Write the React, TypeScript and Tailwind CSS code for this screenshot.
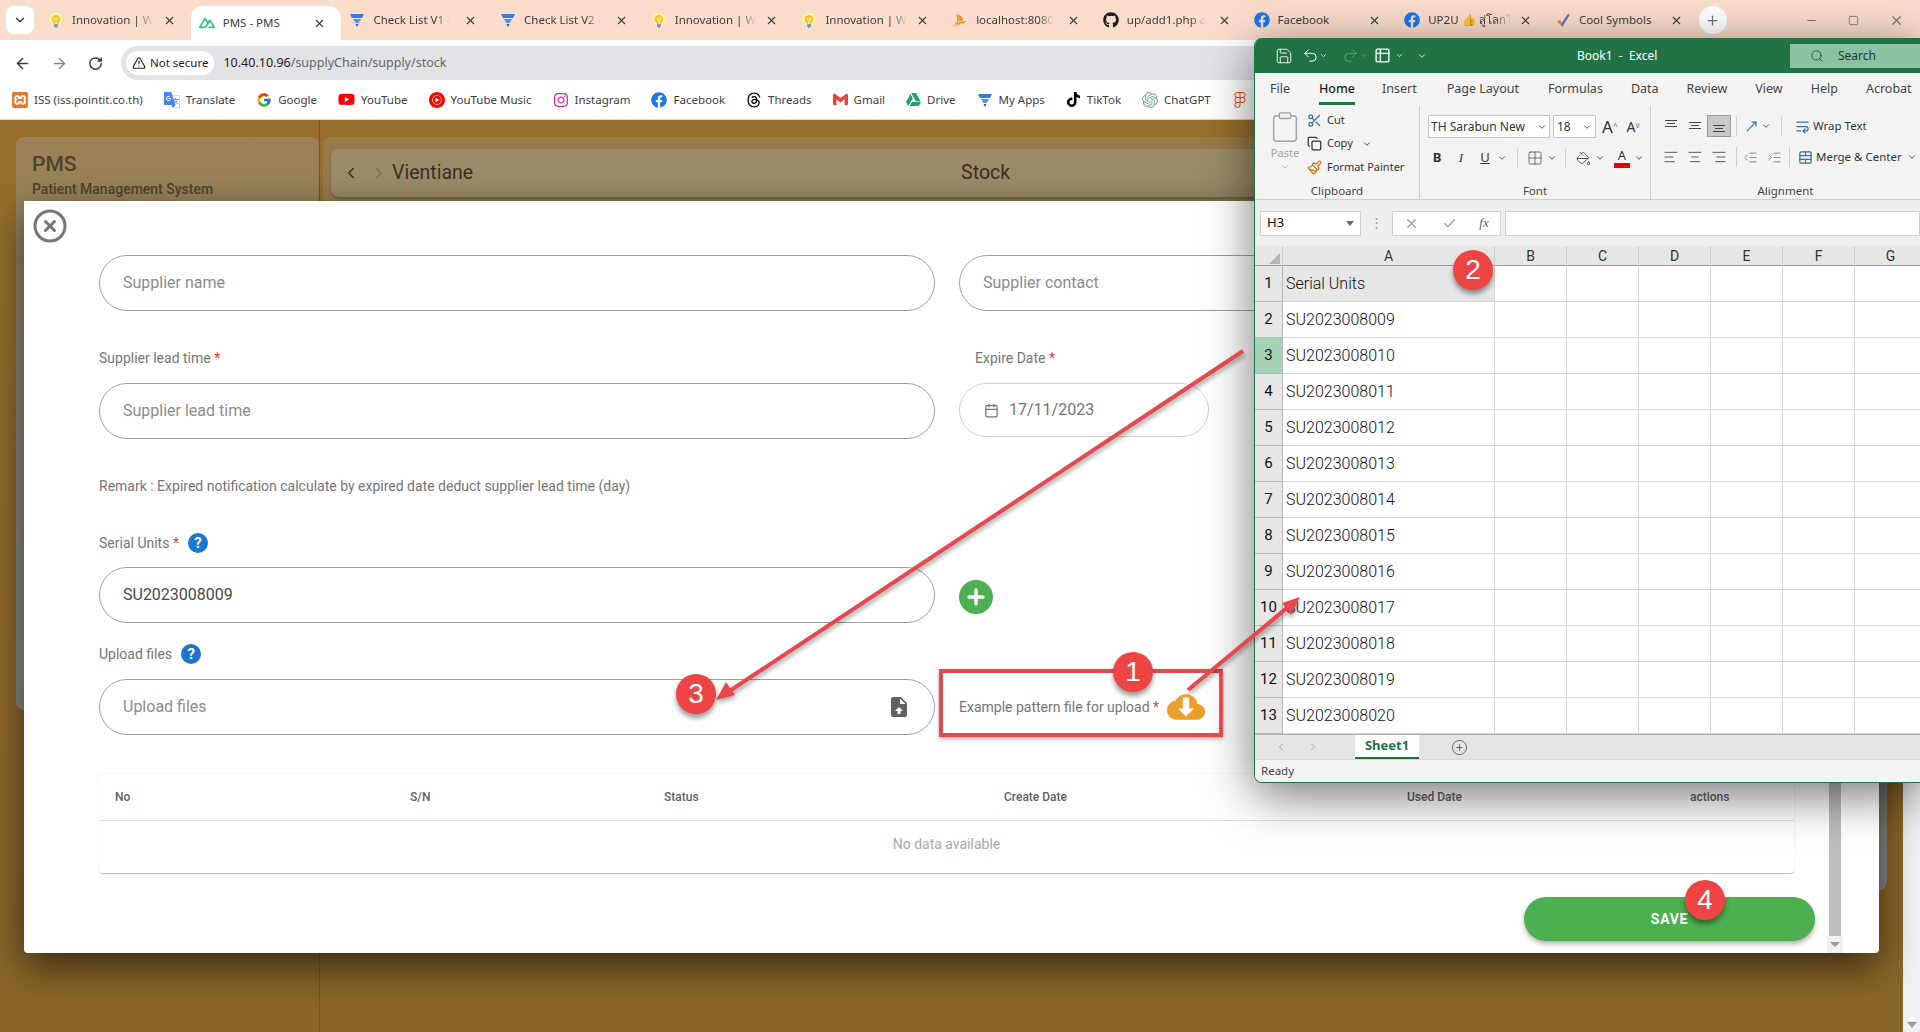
import { ChevronDown, X, Plus, Minus, Square, ArrowLeft, ArrowRight, RotateCw, TriangleAlert, Calendar, CircleX, Save, Undo2, Redo2, Search, Scissors, Copy, Clipboard, Paintbrush, AlignLeft, AlignCenter, AlignRight, IndentDecrease, IndentIncrease, WrapText, TableCellsMerge, PaintBucket, Grid2x2, Check, ChevronLeft, ChevronRight, CirclePlus, Table2, MoveUpRight } from 'lucide-react'
import { FcIdea, FcGoogle } from 'react-icons/fc'
import { FaFacebook, FaGithub, FaYoutube, FaInstagram, FaFigma, FaTiktok } from 'react-icons/fa'
import { FaThreads } from 'react-icons/fa6'
import { SiNuxtdotjs, SiPhpmyadmin, SiXampp, SiGoogletranslate, SiYoutubemusic, SiGmail, SiGoogledrive, SiOpenai } from 'react-icons/si'
import type { ReactNode } from 'react'

function Funnel() {
  return (
    <svg viewBox="0 0 16 16" className="w-4 h-4">
      <path d="M1 2h14l-2 4H3z" fill="#2f7de1" />
      <path d="M4 7h8l-2.5 4h-3z" fill="#4c93ee" />
      <path d="M6.5 12h3L8 15z" fill="#1a5fc0" />
    </svg>
  )
}

function CheckMark() {
  return (
    <svg viewBox="0 0 16 16" className="w-4 h-4">
      <path d="M2 9l3-1 2 3 6-9 1.5 1L7 15z" fill="#e98b3a" />
      <path d="M7 11l6-9 1.5 1L7 15z" fill="#3b76d6" />
    </svg>
  )
}

const tabs: { icon: ReactNode; title: string; active?: boolean; fade?: boolean }[] = [
  { icon: <FcIdea size={18} />, title: 'Innovation | W', fade: true },
  { icon: <SiNuxtdotjs size={16} className="text-[#21c58b]" />, title: 'PMS - PMS', active: true },
  { icon: <Funnel />, title: 'Check List V1 -', fade: true },
  { icon: <Funnel />, title: 'Check List V2 -', fade: true },
  { icon: <FcIdea size={18} />, title: 'Innovation | W', fade: true },
  { icon: <FcIdea size={18} />, title: 'Innovation | W', fade: true },
  { icon: <SiPhpmyadmin size={16} className="text-[#e8912d]" />, title: 'localhost:8080', fade: true },
  { icon: <FaGithub size={16} className="text-[#1b1f23]" />, title: 'up/add1.php a', fade: true },
  { icon: <FaFacebook size={16} className="text-[#1877f2]" />, title: 'Facebook' },
  { icon: <FaFacebook size={16} className="text-[#1877f2]" />, title: 'UP2U 👍 สู่โลกใ', fade: true },
  { icon: <CheckMark />, title: 'Cool Symbols' },
]

const bookmarks: { icon: ReactNode; label: string }[] = [
  { icon: <SiXampp size={16} className="text-[#e8762d]" />, label: 'ISS (iss.pointit.co.th)' },
  { icon: <SiGoogletranslate size={16} className="text-[#4285f4]" />, label: 'Translate' },
  { icon: <FcGoogle size={16} />, label: 'Google' },
  { icon: <FaYoutube size={17} className="text-[#ff0000]" />, label: 'YouTube' },
  { icon: <SiYoutubemusic size={16} className="text-[#ff0000]" />, label: 'YouTube Music' },
  { icon: <FaInstagram size={16} className="text-[#d6249f]" />, label: 'Instagram' },
  { icon: <FaFacebook size={16} className="text-[#1877f2]" />, label: 'Facebook' },
  { icon: <FaThreads size={16} className="text-black" />, label: 'Threads' },
  { icon: <SiGmail size={15} className="text-[#ea4335]" />, label: 'Gmail' },
  { icon: <SiGoogledrive size={15} className="text-[#1fa463]" />, label: 'Drive' },
  { icon: <Funnel />, label: 'My Apps' },
  { icon: <FaTiktok size={15} className="text-black" />, label: 'TikTok' },
  { icon: <SiOpenai size={16} className="text-[#74aa9c]" />, label: 'ChatGPT' },
]

function BrowserChrome() {
  return (
    <div className="shrink-0 font-['Noto_Sans',sans-serif] text-[#3c3c3c]">
      <div className="h-10 bg-[#fadccb] flex items-center relative">
        <div className="w-7 h-7 ml-[6px] mr-[6px] rounded-lg bg-white flex items-center justify-center">
          <ChevronDown size={14} strokeWidth={2.5} />
        </div>
        {tabs.map((t, i) => (
          <div
            key={i}
            className={`w-[150.7px] shrink-0 flex items-center pl-2 pr-[15px] ${
              t.active ? 'h-[34px] self-end bg-white rounded-t-xl' : 'h-7'
            }`}
          >
            <span className="w-4 flex justify-center shrink-0">{t.icon}</span>
            <span
              className={`ml-2 whitespace-nowrap text-[11.5px] ${
                t.fade ? '[mask-image:linear-gradient(to_right,black_80%,transparent)]' : ''
              }`}
            >
              {t.title}
            </span>
            <X size={13} strokeWidth={2} className="ml-auto shrink-0" />
          </div>
        ))}
        <div className="w-7 h-7 ml-[1px] rounded-full bg-white flex items-center justify-center">
          <Plus size={15} className="text-[#777]" />
        </div>
        <div className="ml-auto flex items-center gap-[30px] pr-4 text-[#777]">
          <Minus size={13} />
          <Square size={11} />
          <X size={15} />
        </div>
      </div>
      <div className="h-10 bg-white flex items-center pt-[6px]">
        <div className="w-[121px] flex items-center shrink-0 pl-[14px] gap-5">
          <ArrowLeft size={17} strokeWidth={2.2} />
          <ArrowRight size={17} strokeWidth={2.2} className="text-[#888]" />
          <RotateCw size={15} strokeWidth={2.4} />
        </div>
        <div className="flex-1 h-[34px] bg-[#e2e3e6] rounded-l-full flex items-center pl-[5px]">
          <div className="h-6 px-[6px] bg-white rounded-full flex items-center gap-[4px] text-[11.5px] text-[#222]">
            <TriangleAlert size={14} />
            Not secure
          </div>
          <span className="ml-[9px] text-[12.5px] text-[#666]">
            <span className="text-[#222]">10.40.10.96</span>/supplyChain/supply/stock
          </span>
        </div>
      </div>
      <div className="h-10 bg-white flex items-center pl-3 gap-[21px] text-[11.5px] border-b border-[#d9d4c5]">
        {bookmarks.map((b, i) => (
          <div key={i} className="flex items-center gap-[6px] whitespace-nowrap">
            {b.icon}
            {b.label}
          </div>
        ))}
        <FaFigma size={16} className="text-[#f24e1e]" />
      </div>
    </div>
  )
}

function BackgroundPage() {
  return (
    <div className="h-full bg-gradient-to-b from-[#96702b] to-[#8a6528] flex pr-4 font-['Roboto',sans-serif]">
      <div className="w-[320px] shrink-0 h-full pl-4 pt-[17px] border-r border-[#75561f]">
        <div className="h-[573px] rounded-lg bg-gradient-to-b from-[#9c8153] via-[#8f8878] to-[#8a8a82] px-4 pt-[15px] text-[#4f432d]">
          <div className="text-[21px] font-medium leading-6">PMS</div>
          <div className="text-[14px] font-medium mt-[3px]">Patient Management System</div>
        </div>
      </div>
      <div className="ml-[3px] w-[1564px] h-[753px] mt-[17px] rounded-lg bg-gradient-to-b from-[#977a48] via-[#8d8a82] to-[#8a8a8a] pt-3 px-2">
        <div className="h-12 rounded-lg bg-[#9c8b69] flex items-center pl-[11px] text-[#3b3022] shadow-[0_2px_3px_rgba(0,0,0,0.2)]">
          <ChevronLeft size={18} />
          <ChevronRight size={18} className="ml-[10px] text-[#7d6f55]" />
          <span className="ml-[4px] text-[19.5px]">Vientiane</span>
          <span className="ml-[488px] text-[19.5px]">Stock</span>
        </div>
      </div>
    </div>
  )
}

function Field({ text, filled, icon }: { text: string; filled?: boolean; icon?: ReactNode }) {
  return (
    <div className="h-14 rounded-full border border-[#9e9e9e] flex items-center pl-[23px] pr-5 text-[16px]">
      <span className={filled ? 'text-[#4a4a4a]' : 'text-[#8c8c8c]'}>{text}</span>
      {icon && <span className="ml-auto">{icon}</span>}
    </div>
  )
}

function Help() {
  return (
    <span className="w-5 h-5 rounded-full bg-[#1976d2] text-white text-[15px] font-bold flex items-center justify-center leading-none">
      ?
    </span>
  )
}

const Star = () => <span className="text-[#e53935]"> *</span>

function Modal() {
  return (
    <div className="absolute left-6 top-[81px] w-[1855px] h-[752px] bg-white rounded-b shadow-[0_14px_40px_rgba(0,0,0,0.6)] font-['Roboto',sans-serif] flex">
      <div className="w-[1803px] shrink-0 pl-[8px]">
        <CircleX size={36} strokeWidth={2} className="text-[#757575] mt-[7px]" />
        <div className="ml-[67px] w-[1695px]">
          <div className="grid grid-cols-[836px_1fr] gap-x-6 mt-[11px]">
            <Field text="Supplier name" />
            <Field text="Supplier contact" />
          </div>
          <div className="grid grid-cols-[836px_1fr] gap-x-6 mt-[37px] text-[14px] text-[#757575]">
            <div>
              <div className="h-[20px] mb-[15px] leading-5">Supplier lead time<Star /></div>
              <Field text="Supplier lead time" />
            </div>
            <div>
              <div className="h-[20px] mb-[15px] leading-5 pl-4">Expire Date<Star /></div>
              <div className="w-[250px] h-[54px] rounded-full border border-[#d0d0d0] flex items-center pl-6 gap-[10px] text-[16px]">
                <Calendar size={15} />
                17/11/2023
              </div>
            </div>
          </div>
          <div className="mt-[37px] text-[14px] text-[#757575] leading-5">
            Remark : Expired notification calculate by expired date deduct supplier lead time (day)
          </div>
          <div className="mt-[37px] text-[14px] text-[#757575] flex items-center gap-[9px] h-5">
            <span>Serial Units<Star /></span>
            <Help />
          </div>
          <div className="grid grid-cols-[836px_1fr] gap-x-6 mt-[14px]">
            <Field text="SU2023008009" filled />
            <div className="flex items-center pt-[4px]">
              <span className="w-[34px] h-[34px] rounded-full bg-[#4caf50] flex items-center justify-center text-white">
                <Plus size={24} strokeWidth={3.5} />
              </span>
            </div>
          </div>
          <div className="mt-[21px] text-[14px] text-[#757575] flex items-center gap-[9px] h-5">
            <span>Upload files</span>
            <Help />
          </div>
          <div className="grid grid-cols-[836px_1fr] gap-x-6 mt-[15px]">
            <Field
              text="Upload files"
              icon={
                <svg viewBox="0 0 24 24" className="w-6 h-6 fill-[#616161] mr-[3px]">
                  <path d="M14,2H6A2,2 0 0,0 4,4V20A2,2 0 0,0 6,22H18A2,2 0 0,0 20,20V8L14,2M13.5,16V19H10.5V16H8L12,12L16,16H13.5M13,9V3.5L18.5,9H13Z" />
                </svg>
              }
            />
            <div className="flex items-center gap-[8px] text-[14px] text-[#757575]">
              <span>Example pattern file for upload<Star /></span>
              <svg viewBox="0 0 24 24" className="w-[38px] h-[38px]">
                <path
                  className="fill-[#eaa02a]"
                  d="M19.35 10.04C18.67 6.59 15.64 4 12 4 9.11 4 6.6 5.64 5.35 8.04 2.34 8.36 0 10.91 0 14c0 3.31 2.69 6 6 6h13c2.76 0 5-2.24 5-5 0-2.64-2.05-4.78-4.65-4.96z"
                />
                <path className="fill-white" d="M17 13l-5 5-5-5h3V6h4v7h3z" />
              </svg>
            </div>
          </div>
          <div className="mt-[39px] rounded border-b border-[#bdbdbd] shadow-[0_0_2px_rgba(0,0,0,0.12)]">
            <div className="grid grid-cols-[295px_254px_340px_403px_283px_1fr] h-[47px] items-center text-[12px] font-medium text-[#616161] border-b border-[#e0e0e0]">
              <span className="pl-4">No</span>
              <span className="pl-4">S/N</span>
              <span className="pl-4">Status</span>
              <span className="pl-4">Create Date</span>
              <span className="pl-4">Used Date</span>
              <span className="pl-4">actions</span>
            </div>
            <div className="h-[52px] flex items-center justify-center text-[14px] text-[#a8a8a8] pb-[5px]">
              No data available
            </div>
          </div>
          <div className="flex justify-end mt-[23px] mr-[-21px]">
            <div className="w-[291px] h-11 rounded-full bg-[#4caf50] text-white text-[14px] font-bold tracking-wider flex items-center justify-center shadow-[0_3px_5px_rgba(0,0,0,0.3)]">
              SAVE
            </div>
          </div>
        </div>
      </div>
      <div className="w-4 flex flex-col">
        <div className="flex-1 bg-[#bdbdbd] mx-[2px]" />
        <div className="h-[17px] bg-[#f1f1f1] flex items-center justify-center">
          <span className="w-0 h-0 border-x-[5px] border-x-transparent border-t-[5px] border-t-[#9a9a9a]" />
        </div>
      </div>
    </div>
  )
}

function RibbonIcon({ children, className }: { children: ReactNode; className?: string }) {
  return <span className={`flex items-center justify-center w-6 h-[22px] ${className ?? ''}`}>{children}</span>
}

const VLines = ({ pos }: { pos: 'top' | 'mid' | 'bot' }) => (
  <svg viewBox="0 0 16 16" className="w-4 h-4 stroke-[#444] fill-none">
    {pos === 'top' && <path d="M2 2.5h12M4 5.5h8M2 8.5h12" />}
    {pos === 'mid' && <path d="M2 4.5h12M4 7.5h8M2 10.5h12" />}
    {pos === 'bot' && <path d="M2 7.5h12M4 10.5h8M2 13.5h12" />}
  </svg>
)

const GroupLabel = ({ children }: { children: ReactNode }) => (
  <div className="absolute -bottom-[2px] left-0 right-0 text-center text-[11.5px] text-[#444] leading-5">{children}</div>
)

function Ribbon() {
  return (
    <div className="h-[94px] flex text-[11px] text-[#333] border-b border-[#cfcfcf] shadow-[0_2px_3px_rgba(0,0,0,0.12)]">
      <div className="w-[165px] relative border-r border-[#cfcfcf] flex pl-[13px] pt-[4px]">
        <div className="w-[34px] flex flex-col items-center text-[#a0a0a0]">
          <Clipboard size={34} strokeWidth={1} />
          <span className="mt-[1px]">Paste</span>
          <ChevronDown size={10} />
        </div>
        <div className="ml-[5px] flex flex-col gap-[3.5px]">
          <div className="flex items-center h-5 gap-[5px]"><Scissors size={15} className="text-[#3a6ea5]" />Cut</div>
          <div className="flex items-center h-5 gap-[5px]"><Copy size={15} />Copy<ChevronDown size={10} className="ml-1" /></div>
          <div className="flex items-center h-5 gap-[5px] whitespace-nowrap"><Paintbrush size={15} className="text-[#c9781f]" />Format Painter</div>
        </div>
        <GroupLabel>Clipboard</GroupLabel>
      </div>
      <div className="w-[231px] relative border-r border-[#cfcfcf] pl-[8px] pt-[9px]">
        <div className="flex items-center gap-[3px]">
          <div className="w-[122px] h-[23px] bg-white border border-[#c6c6c6] flex items-center justify-between px-[2px] text-[12px]">
            TH Sarabun New<ChevronDown size={10} />
          </div>
          <div className="w-[43px] h-[23px] bg-white border border-[#c6c6c6] flex items-center justify-between px-[3px] text-[12px]">
            18<ChevronDown size={10} />
          </div>
          <span className="ml-[3px] text-[17px] leading-none">A<sup className="text-[8px] text-[#3a6ea5]">^</sup></span>
          <span className="ml-[6px] text-[14px] leading-none">A<sup className="text-[8px] text-[#3a6ea5]">v</sup></span>
        </div>
        <div className="flex items-center mt-[9px] -ml-[3px] text-[13px]">
          <RibbonIcon><b>B</b></RibbonIcon>
          <RibbonIcon><i className="font-['Liberation_Serif',serif]">I</i></RibbonIcon>
          <RibbonIcon><u>U</u></RibbonIcon>
          <ChevronDown size={10} />
          <span className="ml-[10px] h-5 border-l border-[#cfcfcf]" />
          <RibbonIcon className="ml-[5px]"><Grid2x2 size={16} strokeWidth={1} /></RibbonIcon>
          <ChevronDown size={10} />
          <span className="ml-[8px] h-5 border-l border-[#cfcfcf]" />
          <RibbonIcon className="ml-[5px]"><PaintBucket size={15} strokeWidth={1.3} /></RibbonIcon>
          <ChevronDown size={10} />
          <span className="ml-[5px] w-6 h-[22px] flex flex-col items-center">
            <span className="leading-[16px]">A</span>
            <span className="w-4 h-[5px] bg-[#e8000d]" />
          </span>
          <ChevronDown size={10} />
        </div>
        <GroupLabel>Font</GroupLabel>
      </div>
      <div className="flex-1 relative pl-2 pt-[9px]">
        <div className="flex items-center">
          <RibbonIcon><VLines pos="top" /></RibbonIcon>
          <RibbonIcon><VLines pos="mid" /></RibbonIcon>
          <RibbonIcon className="bg-[#c8c8c8] border border-[#9a9a9a]"><VLines pos="bot" /></RibbonIcon>
          <span className="ml-[5px] h-5 border-l border-[#cfcfcf]" />
          <MoveUpRight size={15} className="ml-[7px] text-[#3a6ea5]" />
          <ChevronDown size={10} className="ml-[2px]" />
          <span className="ml-[10px] h-5 border-l border-[#cfcfcf]" />
          <WrapText size={15} className="ml-[13px] text-[#3a6ea5]" />
          <span className="ml-[3px] whitespace-nowrap text-[11.5px]">Wrap Text</span>
        </div>
        <div className="flex items-center mt-[9px]">
          <RibbonIcon><AlignLeft size={16} strokeWidth={1.2} /></RibbonIcon>
          <RibbonIcon><AlignCenter size={16} strokeWidth={1.2} /></RibbonIcon>
          <RibbonIcon><AlignRight size={16} strokeWidth={1.2} /></RibbonIcon>
          <span className="ml-[5px] h-5 border-l border-[#cfcfcf]" />
          <RibbonIcon className="ml-[1px]"><IndentDecrease size={15} strokeWidth={1.2} className="text-[#3a6ea5]" /></RibbonIcon>
          <RibbonIcon><IndentIncrease size={15} strokeWidth={1.2} className="text-[#3a6ea5]" /></RibbonIcon>
          <span className="ml-[3px] h-5 border-l border-[#cfcfcf]" />
          <TableCellsMerge size={15} className="ml-[8px] text-[#3a6ea5]" />
          <span className="ml-[3px] whitespace-nowrap text-[11.5px]">Merge &amp; Center</span>
          <ChevronDown size={10} className="ml-[5px]" />
        </div>
        <GroupLabel>Alignment</GroupLabel>
      </div>
    </div>
  )
}

const serials = Array.from({ length: 12 }, (_, i) => `SU20230080${String(i + 9).padStart(2, '0')}`)
const cols = ['B', 'C', 'D', 'E', 'F', 'G']

function Sheet() {
  const rows = ['Serial Units', ...serials]
  return (
    <div className="h-[488px] overflow-hidden font-['Roboto',sans-serif]">
      <div className="grid grid-cols-[28px_212px_repeat(6,72px)] h-[20px] bg-[#e6e6e6] border-b border-[#9c9c9c] text-[14px] text-[#333] leading-5">
        <div className="border-r border-[#cfcfcf] flex items-end justify-end p-[2px]">
          <span className="w-0 h-0 border-l-[11px] border-l-transparent border-b-[11px] border-b-[#b4b4b4]" />
        </div>
        <div className="text-center border-r border-[#cfcfcf]">A</div>
        {cols.map((c) => (
          <div key={c} className="text-center border-r border-[#cfcfcf]">{c}</div>
        ))}
      </div>
      {rows.map((r, i) => (
        <div key={i} className="grid grid-cols-[28px_212px_repeat(6,72px)] h-9 text-[16px] font-light text-[#111]">
          <div className={`text-[15px] font-normal flex items-center justify-center border-r border-b border-[#b8b8b8] ${i === 2 ? 'bg-[#a3d2b7]' : 'bg-[#e6e6e6]'}`}>
            {i + 1}
          </div>
          <div className={`flex items-center pl-[3px] border-r border-b border-[#d4d4d4] ${i === 0 ? 'bg-[#e6e6e6]' : 'bg-white'}`}>
            {r}
          </div>
          {cols.map((c) => (
            <div key={c} className="bg-white border-r border-b border-[#d4d4d4]" />
          ))}
        </div>
      ))}
    </div>
  )
}

function ExcelWindow() {
  return (
    <div className="absolute left-[1254px] top-[38px] w-[666px] h-[745px] bg-[#f3f3f3] rounded-tl-lg rounded-bl-lg border-l border-b border-[#217346] shadow-[0_12px_50px_rgba(0,0,0,0.55)] overflow-hidden font-['Noto_Sans',sans-serif] flex flex-col">
      <div className="h-[35px] bg-[#217346] text-white flex items-center pl-5 shrink-0">
        <Save size={18} strokeWidth={1.2} />
        <Undo2 size={17} strokeWidth={1.4} className="ml-[9px]" />
        <ChevronDown size={9} />
        <Redo2 size={17} strokeWidth={1.4} className="ml-[14px] text-[#5f9e7d]" />
        <ChevronDown size={9} className="text-[#5f9e7d]" />
        <Table2 size={17} className="ml-[6px]" />
        <ChevronDown size={9} className="ml-1" />
        <ChevronDown size={10} className="ml-[13px]" />
        <span className="absolute left-[322px] text-[12px] whitespace-nowrap">Book1&nbsp; - &nbsp;Excel</span>
        <div className="ml-auto w-[130px] h-6 bg-[#8cc0a3] flex items-center pl-5 gap-[14px] text-[#1e3d2c] text-[12px]">
          <Search size={14} strokeWidth={1.3} />
          Search
        </div>
      </div>
      <div className="h-[33px] shrink-0 flex items-center text-[12.5px] text-[#444] pl-[15px] whitespace-nowrap">
        <span>File</span>
        <span className="ml-[29px] font-medium text-[#1f1f1f] relative">
          Home
          <span className="absolute left-0 right-0 -bottom-[6px] h-[3px] bg-[#217346]" />
        </span>
        <span className="ml-[27px]">Insert</span>
        <span className="ml-[30px]">Page Layout</span>
        <span className="ml-[29px]">Formulas</span>
        <span className="ml-[28px]">Data</span>
        <span className="ml-[28px]">Review</span>
        <span className="ml-[28px]">View</span>
        <span className="ml-[28px]">Help</span>
        <span className="ml-[28px]">Acrobat</span>
      </div>
      <Ribbon />
      <div className="h-[46px] shrink-0 flex items-center pl-[5px] text-[13px] bg-[#eeeeee]">
        <div className="w-[101px] h-[25px] bg-white border border-[#d0d0d0] flex items-center justify-between px-[6px]">
          H3 <span className="w-0 h-0 border-x-[4px] border-x-transparent border-t-[5px] border-t-[#666]" />
        </div>
        <span className="w-[31px] text-center text-[#999]">⋮</span>
        <div className="w-[109px] h-[25px] bg-white border border-[#d0d0d0] flex items-center justify-around text-[#9c9c9c]">
          <X size={15} />
          <Check size={15} />
          <i className="font-['Liberation_Serif',serif] text-[#666]">fx</i>
        </div>
        <div className="ml-[4px] flex-1 h-[25px] bg-white border border-[#d0d0d0]" />
      </div>
      <Sheet />
      <div className="h-[25px] shrink-0 bg-[#e4e4e4] border-t border-[#b0b0b0] flex items-center relative pl-[20px] gap-[20px] text-[#aaa]">
        <ChevronLeft size={12} />
        <ChevronRight size={12} />
        <div className="absolute left-[100px] top-0 w-[64px] h-[24px] bg-white border-b-2 border-[#217346] text-[#217346] font-bold text-[13px] flex items-center justify-center">
          Sheet1
        </div>
        <CirclePlus size={17} strokeWidth={1.2} className="absolute left-[196px] text-[#555]" />
      </div>
      <div className="flex-1 bg-[#f3f3f3] border-t border-[#d8d8d8] flex items-center pl-[6px] text-[11.5px] text-[#444]">
        Ready
      </div>
    </div>
  )
}

function Badge({ n, className }: { n: number; className: string }) {
  return (
    <div className={`absolute w-10 h-10 rounded-full bg-[#ef4444] text-white text-[28px] flex items-center justify-center font-['Liberation_Sans',sans-serif] shadow-[0_4px_5px_rgba(0,0,0,0.4)] ${className}`}>
      {n}
    </div>
  )
}

function Annotations() {
  return (
    <>
      <div className="absolute left-[939px] top-[669px] w-[284px] h-[68px] border-4 border-[#e5484d] shadow-[0_2px_4px_rgba(0,0,0,0.3)]" />
      <svg className="absolute inset-0 w-[1920px] h-[1032px] pointer-events-none drop-shadow-[1px_3px_2px_rgba(0,0,0,0.35)]" viewBox="0 0 1920 1032">
        <path d="M1243 351L722 696" stroke="#e5484d" strokeWidth="4" fill="none" />
        <path d="M716 700L735 695L726 682Z" fill="#e5484d" />
        <path d="M1188 690L1294 602" stroke="#e5484d" strokeWidth="4" fill="none" />
        <path d="M1300 597L1282 603L1291 615Z" fill="#e5484d" />
      </svg>
      <Badge n={1} className="left-[1113px] top-[652px]" />
      <Badge n={2} className="left-[1453px] top-[250px]" />
      <Badge n={3} className="left-[676px] top-[674px]" />
      <Badge n={4} className="left-[1685px] top-[880px]" />
    </>
  )
}

export default function App() {
  return (
    <div className="relative w-[1920px] h-[1032px] overflow-hidden flex flex-col">
      <BrowserChrome />
      <div className="flex-1 relative flex min-h-0">
        <div className="flex-1 min-w-0 relative">
          <BackgroundPage />
          <Modal />
        </div>
        <div className="w-[17px] bg-[#f1f1f1] flex flex-col justify-end items-center pb-1">
          <span className="w-0 h-0 border-x-[5px] border-x-transparent border-t-[6px] border-t-[#999]" />
        </div>
      </div>
      <ExcelWindow />
      <Annotations />
    </div>
  )
}
